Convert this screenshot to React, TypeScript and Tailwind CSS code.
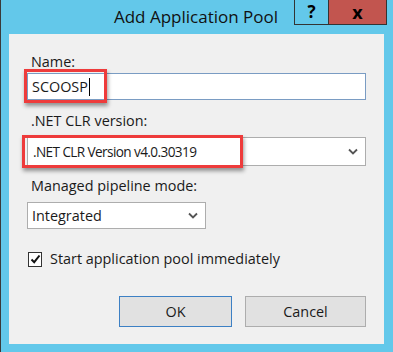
import React from "react";

function Chevron() {
  return (
    <svg width="10" height="7" viewBox="0 0 10 7" className="shrink-0">
      <path d="M1 1.5 L5 5.5 L9 1.5" fill="none" stroke="#555" strokeWidth="1.8" />
    </svg>
  );
}

export default function App() {
  return (
    <div
      className="w-[393px] h-[352px] bg-[#63c8ea] border-l border-[#3a3a3a] flex flex-col text-[#1a1a1a] overflow-hidden"
      style={{ fontFamily: '"Open Sans", "Noto Sans", sans-serif' }}
    >
      {/* title bar */}
      <div className="h-[34px] flex items-start relative shrink-0">
        <div className="flex-1 text-center pt-[6px] text-[17px] leading-[22px] text-[#111] pr-[2px]">
          Add Application Pool
        </div>
        <div className="absolute right-[6px] top-[-1px] flex h-[26px]">
          <div className="w-[35px] h-full border border-[#333] flex items-center justify-center font-bold text-[17px] text-black">
            ?
          </div>
          <div className="w-[58px] h-full border border-l-0 border-[#333] bg-[#c2554f] flex items-center justify-center font-bold text-[18px] text-black">
            x
          </div>
        </div>
      </div>

      {/* body */}
      <div className="ml-[8px] w-[375px] h-[310px] bg-[#f0f0f0] flex flex-col pl-[18px] pr-[18px] pt-[19px] text-[14.4px] leading-[18px]">
        <div className="pl-[4px]">Name:</div>
        <div className="mt-[2px] relative">
          <div className="h-[27px] bg-white border border-[#7a9cc3] flex items-center pl-[4px]">
            SCOOSP<span className="w-px h-[18px] bg-black ml-[1px]" />
          </div>
          <div className="absolute left-[-3px] top-[-4px] w-[83px] h-[34px] border-[3px] border-[#ee3b3b] shadow-[1px_3px_4px_rgba(0,0,0,0.4)]" />
        </div>

        <div className="pl-[4px] mt-[12px]">.NET CLR version:</div>
        <div className="mt-[7px] relative">
          <div className="h-[29px] bg-white border border-[#adadad] flex items-center justify-between pl-[5px] pr-[7px]">
            <span className="text-[13.6px] tracking-[-0.6px]">.NET CLR Version v4.0.30319</span>
            <Chevron />
          </div>
          <div className="absolute left-[-5px] top-[-2px] w-[221px] h-[33px] border-[3px] border-[#ee3b3b] shadow-[1px_3px_4px_rgba(0,0,0,0.4)]" />
        </div>

        <div className="pl-[4px] mt-[11px]">Managed pipeline mode:</div>
        <div className="mt-[7px] w-[179px] h-[27px] bg-white border border-[#adadad] flex items-center justify-between pl-[4px] pr-[7px]">
          <span>Integrated</span>
          <Chevron />
        </div>

        <div className="mt-[21px] flex items-center pl-[1px]">
          <div className="w-[14px] h-[15px] bg-white border border-[#333] flex items-center justify-center">
            <svg width="11" height="10" viewBox="0 0 11 10">
              <path d="M1.5 5.5 L4.2 8.2 L9.5 1.5" fill="none" stroke="#111" strokeWidth="2" />
            </svg>
          </div>
          <span className="ml-[8px]">Start application pool immediately</span>
        </div>

        <div className="mt-[28px] flex justify-end gap-[13px]">
          <button className="w-[113px] h-[31px] bg-[#e1e1e1] border border-[#3d80c4]">OK</button>
          <button className="w-[121px] h-[31px] bg-[#e1e1e1] border border-[#adadad]">Cancel</button>
        </div>
      </div>
    </div>
  );
}
